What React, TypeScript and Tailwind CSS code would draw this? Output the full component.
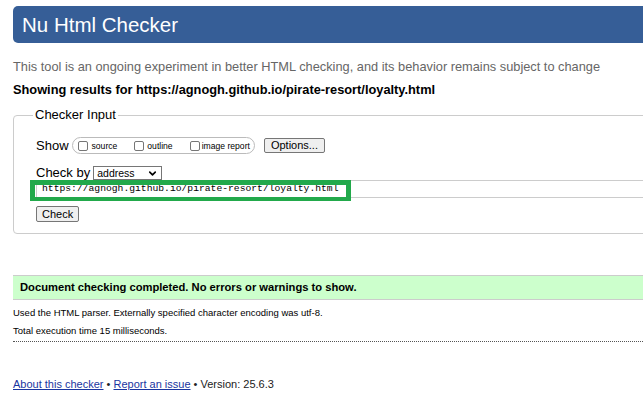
import { ChevronDown } from "lucide-react";

const sans = "font-['Liberation_Sans',Arial,sans-serif]";

const Box = ({ label, gap }: { label: string; gap: string }) => (
  <span className="flex items-end">
    <span className="w-[10px] h-[10px] rounded-[2px] border border-[#767676] bg-white" />
    <span className={`${gap} text-[8.6px] leading-[9px] text-black whitespace-nowrap`}>{label}</span>
  </span>
);

const Btn = ({ children, className = "" }: { children: React.ReactNode; className?: string }) => (
  <button
    className={`px-[5px] border border-[#767676] bg-[#efefef] rounded-[2px] text-[11px] leading-[13px] text-black whitespace-nowrap ${className}`}
  >
    {children}
  </button>
);

export default function App() {
  return (
    <div className={`w-screen h-screen overflow-hidden bg-white pl-[13px] pt-[6px] ${sans}`}>
      {/* Title bar */}
      <div className="-mr-[20px] h-[37px] rounded-l-[5px] bg-[#365e97] pl-[9px] text-white text-[20.5px] leading-[37px]">
        Nu Html Checker
      </div>

      <p className="mt-[16px] text-[12.8px] leading-[16px] text-[#666] whitespace-nowrap">
        This tool is an ongoing experiment in better HTML checking, and its behavior remains subject to change
      </p>
      <p className="mt-[7px] text-[12.8px] leading-[16px] font-bold text-black whitespace-nowrap">
        Showing results for https://agnogh.github.io/pirate-resort/loyalty.html
      </p>

      {/* Checker input */}
      <fieldset className="mt-[9px] -mr-[20px] h-[127px] border border-[#ccc] rounded-[4px] pl-[19px]">
        <legend className="px-[2px] text-[13px] leading-[16px] text-black">Checker Input</legend>

        <div className="pl-[3px]">
          <div className="mt-[14px] flex items-center h-[17px]">
            <span className="text-[13px] text-black">Show</span>
            <span className="ml-[3px] h-[17px] flex items-center rounded-full border border-[#bbb] pl-[5px] pr-[4px]">
              <Box label="source" gap="ml-[4px]" />
              <span className="w-[17px]" />
              <Box label="outline" gap="ml-[3px]" />
              <span className="w-[17px]" />
              <Box label="image report" gap="ml-[2px]" />
            </span>
            <Btn className="ml-[9px] h-[15px] px-[6px]">Options...</Btn>
          </div>

          <div className="mt-[12px] flex items-center h-[14px]">
            <span className="text-[13px] text-black">Check by</span>
            <span className="ml-[3px] w-[69px] h-[14px] border border-[#767676] bg-white flex items-center justify-between pl-[3px] pr-[3px] text-[10.5px] leading-[12px] text-black">
              address
              <ChevronDown className="w-[11px] h-[11px]" strokeWidth={3.5} />
            </span>
          </div>

          <div className="relative">
            <div className="h-[18px] border-y border-l border-[#ccc] bg-white flex items-center pl-[5px] font-['Liberation_Mono',monospace] text-[9.7px] text-black whitespace-nowrap">
              https://agnogh.github.io/pirate-resort/loyalty.html
            </div>
            <div className="absolute -left-[6px] top-0 w-[321px] h-[21px] border-[5px] border-b-[4px] border-[#22a94b]" />
          </div>

          <div className="mt-[8px] flex">
            <Btn className="h-[16px]">Check</Btn>
          </div>
        </div>
      </fieldset>

      {/* Result */}
      <div className="mt-[41px] -mr-[20px] h-[25px] border-y border-[#ccc] bg-[#ccffcc] pl-[7px] flex items-center text-[11.2px] font-bold text-black whitespace-nowrap">
        Document checking completed. No errors or warnings to show.
      </div>
      <p className="mt-[7px] text-[9.5px] leading-[12px] text-black whitespace-nowrap">
        Used the HTML parser. Externally specified character encoding was utf-8.
      </p>
      <p className="mt-[6px] text-[9.5px] leading-[12px] text-black">Total execution time 15 milliseconds.</p>
      <div className="mt-[4px] -mr-[20px] border-t border-dotted border-[#555]" />

      <p className="mt-[35px] text-[11px] leading-[14px] text-[#222] whitespace-nowrap">
        <a className="text-[#1a35a0] underline">About this checker</a> •{" "}
        <a className="text-[#1a35a0] underline">Report an issue</a> • Version: 25.6.3
      </p>
    </div>
  );
}
